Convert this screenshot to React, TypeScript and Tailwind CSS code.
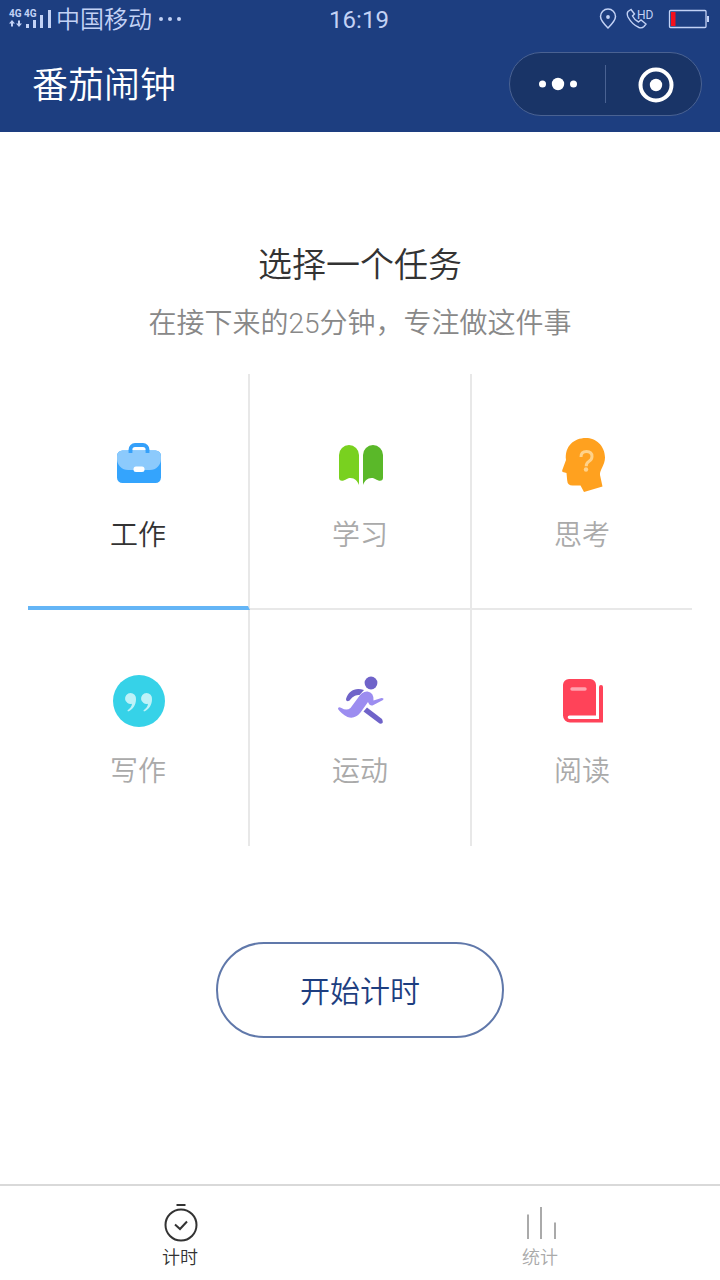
import React, { useState } from 'react';

interface Task {
  name: string;
  icon: React.ReactNode;
}

const BriefcaseIcon = () => (
  <svg className="w-15 h-15" viewBox="-1 -1 60 60">
    <path d="M21.500 18v-3.500a4.500 4.500 0 0 1 4.500-4.500h8a4.500 4.500 0 0 1 4.500 4.500v3.500" fill="none" stroke="#34a0fa" strokeWidth="3.800" />
    <rect x="8" y="15.500" width="44" height="32.500" rx="5.500" fill="#34a4fd" />
    <path d="M13.500 15.500h33a5.500 5.500 0 0 1 5.500 5.500v3a11 11 0 0 1-11 11h-22a11 11 0 0 1-11-11v-3a5.500 5.500 0 0 1 5.500-5.500z" fill="#8ccafc" />
    <path d="M21.500 18v-3M38.500 18v-3" stroke="#34a0fa" strokeWidth="3.800" />
    <rect x="24.500" y="31.500" width="11" height="5.500" rx="2.500" fill="#fff" />
  </svg>
);

const BookIcon = () => (
  <svg className="w-15 h-15" viewBox="-1 -1 60 60">
    <path d="M8 20a10 10 0 0 1 20 0v30c-1.600-4-4.200-7-8.500-7c-4 0-5.500 2.800-8.500 2.800q-3 0-3-3z" fill="#79d11f" />
    <path d="M32 20a10 10 0 0 1 20 0v22.800q0 3-3 3c-3 0-4.500-2.800-8.500-2.800c-4.300 0-6.900 3-8.500 7z" fill="#5ab829" />
  </svg>
);

const ThinkIcon = () => (
  <svg className="w-15 h-15" viewBox="-1 -1 60 60">
    <path d="M33 3C42.500 3 52 10.500 52 22.500C52 30 46.500 35 47 40L49.500 51.500L31 57L27.500 50.500H19.500Q14.500 50.500 14.200 45.500L13.500 38L9.800 37Q8.700 36.500 9.300 35L13 25C11.500 11.500 20.500 3 33 3z" fill="#ffa11f" />
    <path d="M28 22q0-5.500 5.500-5.500t5.500 5q0 3-2.900 4.800t-2.900 5" fill="none" stroke="#ffd28a" strokeWidth="3" />
    <circle cx="33" cy="34.500" r="2.200" fill="#ffd28a" />
  </svg>
);

const QuoteIcon = () => (
  <svg className="w-15 h-15" viewBox="-1 -1 60 60">
    <circle cx="30" cy="30" r="26" fill="#36d2e8" />
    <path d="M21.500 22a5.500 5.500 0 0 1 5.500 6c0 6-3 10.500-8 12.500l-.6-1c3-2.200 4.400-4.200 4.600-6.700a5.500 5.500 0 1 1-1.500-10.800z" fill="#bdf2f8" />
    <path d="M37.500 22a5.500 5.500 0 0 1 5.500 6c0 6-3 10.500-8 12.500l-.6-1c3-2.200 4.400-4.200 4.600-6.700a5.500 5.500 0 1 1-1.500-10.800z" fill="#bdf2f8" />
  </svg>
);

const RunIcon = () => (
  <svg className="w-15 h-15" viewBox="0 0 60 60">
    <circle cx="41" cy="13" r="6.400" fill="#6f63c9" />
    <path d="M34 20C25 17 18.500 21 16 29C16 32 19 31.500 20 30C23 26 26 25 29.500 25z" fill="#6f63c9" />
    <path d="M37 37.500l15 11.500q2.500 5.500-2.500 4.500L33.500 41.500z" fill="#6f63c9" />
    <path d="M37.500 21.500Q44 22.500 43.500 30.500L51.500 28Q54.500 28 53 30L42.500 35.500Q39.500 36 38 32L30.500 42.500Q25 49.500 17.500 47Q11 43.500 8 39Q8 36 11.500 38Q16.500 41 20.500 38L27.500 28.500Q32 21 37.500 21.500z" fill="#9c8df0" />
  </svg>
);

const ReadIcon = () => (
  <svg className="w-15 h-15" viewBox="0 0 60 60">
    <path d="M47 17a2 2 0 0 1 4 0V52.500H18a7 7 0 0 1-7-7V15a6 6 0 0 1 6-6h21a6 6 0 0 1 6 6v30.500H17.500a1.800 1.800 0 0 0 0 3.600H47z" fill="#ff4359" />
    <path d="M20 19h13" stroke="#ffa3af" strokeWidth="3.400" strokeLinecap="round" />
  </svg>
);

const tasks: Task[] = [
  { name: '工作', icon: <BriefcaseIcon /> },
  { name: '学习', icon: <BookIcon /> },
  { name: '思考', icon: <ThinkIcon /> },
  { name: '写作', icon: <QuoteIcon /> },
  { name: '运动', icon: <RunIcon /> },
  { name: '阅读', icon: <ReadIcon /> },
];

const StatusBar = () => (
  <div className="grid grid-cols-[1fr_auto_1fr] items-center h-9 pl-2 pr-2.5 text-[#c3d2f5]">
    <div className="flex items-center gap-1">
      {/* 信号强度 */}
      <svg className="w-11 h-6" viewBox="0 0 44 24" fill="currentColor">
        <text x="1" y="10" fontSize="10" fontWeight="700">4G</text>
        <text x="16" y="10" fontSize="10" fontWeight="700">4G</text>
        <path d="M4 13l3 3.500H5v3H3v-3H1zM11 20l-3-3.500h2v-3h2v3h2z" />
        <path d="M18 17h3v4h-3zM25 13h3v8h-3zM32 8h3v13h-3zM40 3h3v18h-3z" />
      </svg>
      <span className="pt-0.5 text-2xl leading-9">中国移动</span>
      <svg className="w-7 h-6" viewBox="0 0 28 24" fill="currentColor">
        <circle cx="5" cy="12" r="2" />
        <circle cx="14" cy="12" r="2" />
        <circle cx="23" cy="12" r="2" />
      </svg>
    </div>
    <span className="pt-0.5 text-2xl leading-9 font-normal">16:19</span>
    <div className="flex items-center justify-end gap-2">
      <svg className="w-5 h-6" viewBox="0 0 20 24" fill="none" stroke="currentColor" strokeWidth="1.500">
        <path d="M10 21C6 17 2.500 13.500 2.500 9.500a7.500 7.500 0 0 1 15 0C17.500 13.500 14 17 10 21z" />
        <circle cx="10" cy="10" r="1.900" fill="currentColor" stroke="none" />
      </svg>
      <svg className="w-8 h-6" viewBox="1 0 32 24" fill="none" stroke="currentColor" strokeWidth="1.400">
        <path d="M6 2.500L3 4.500Q1.500 6.500 3 10Q7 17.500 14 20.500Q17 21.500 19 19.500L21 17L16 13L13.500 15Q9.500 13 7.500 9L9.500 7z" />
        <text x="12" y="12" fontSize="12" fontWeight="400" fill="currentColor" stroke="none">HD</text>
      </svg>
      <svg className="w-11 h-6" viewBox="0 0 44 24">
        <rect x="3.500" y="3.500" width="36.500" height="17" rx="1" fill="none" stroke="currentColor" strokeWidth="1.300" />
        <rect x="5" y="5" width="4.500" height="14" fill="#f5101c" />
        <rect x="41" y="9" width="2" height="6" fill="currentColor" />
      </svg>
    </div>
  </div>
);

const App = () => {
  const [selected, setSelected] = useState(0);

  return (
    <div className="min-h-screen flex flex-col bg-white font-[350] font-[Roboto,'Noto_Sans_CJK_SC',sans-serif]">
      <header className="bg-[#1d3e80]">
        <StatusBar />
        <div className="flex items-center justify-between h-24 pl-8 pr-[18px]">
          <h1 className="pt-1 text-4xl font-[350] text-white">番茄闹钟</h1>
          <div className="flex items-center w-[193px] h-16 rounded-full border border-[#4a6292] bg-[#193467]">
            <button aria-label="更多" className="flex-1 flex justify-center">
              <svg className="w-10 h-10" viewBox="0 0 40 40" fill="#fff">
                <circle cx="4.500" cy="20" r="3.500" />
                <circle cx="20" cy="20" r="6.200" />
                <circle cx="35.500" cy="20" r="3.500" />
              </svg>
            </button>
            <div className="w-px h-[38px] bg-[#4a6292]" />
            <button aria-label="关闭" className="flex-1 flex justify-center">
              <svg className="w-10 h-10" viewBox="0 0 40 40">
                <circle cx="22" cy="21" r="15.500" fill="none" stroke="#fff" strokeWidth="4" />
                <circle cx="22" cy="21" r="6.200" fill="#fff" />
              </svg>
            </button>
          </div>
        </div>
      </header>

      <main className="flex-1 flex flex-col items-center px-7 pt-27">
        <h2 className="text-[34px] leading-[50px] font-[350] text-[#333]">选择一个任务</h2>
        <p className="mt-3.5 text-[28px] leading-10 text-[#888]">在接下来的25分钟，专注做这件事</p>

        {/* 任务列表 */}
        <div className="mt-[30px] w-full grid grid-cols-[111fr_111fr_110fr]">
          {tasks.map((task, index) => (
            <button
              key={task.name}
              onClick={() => setSelected(index)}
              className={`
                flex flex-col items-center gap-5 h-59 pt-15 border-[#e8e8e8]
                ${index % 3 !== 2 ? 'border-r-2' : ''}
                ${index < 3 ? 'border-b-2' : ''}
                ${selected === index ? 'border-b-4 border-b-[#64b5f6] text-[#333]' : 'text-[#aaa]'}
              `}
            >
              {task.icon}
              <span className="text-[28px] leading-11">{task.name}</span>
            </button>
          ))}
        </div>

        <button className="mt-24 w-72 h-24 pt-1 rounded-full border-2 border-[#6078aa] text-3xl text-[#1d3e80]">
          开始计时
        </button>
      </main>

      <nav className="flex h-24 border-t-2 border-[#d9d9d9] text-lg leading-6">
        <a href="#timer" className="flex-1 flex flex-col items-center pt-4 text-[#333]">
          <svg className="w-11 h-11" viewBox="-1 0 44 44" fill="none" stroke="currentColor" strokeWidth="2">
            <path d="M17.500 3h9" />
            <circle cx="22" cy="23" r="15.500" />
            <path d="M16 22.500l5 4.500l7-7.500" />
          </svg>
          计时
        </a>
        <a href="#stats" className="flex-1 flex flex-col items-center pt-4 text-[#aaa]">
          <svg className="w-11 h-11" viewBox="0 0 44 44" fill="none" stroke="currentColor" strokeWidth="2">
            <path d="M10 12.500v24.500M23 5v32M37 20.500v16.500" />
          </svg>
          统计
        </a>
      </nav>
    </div>
  );
};

export default App;
